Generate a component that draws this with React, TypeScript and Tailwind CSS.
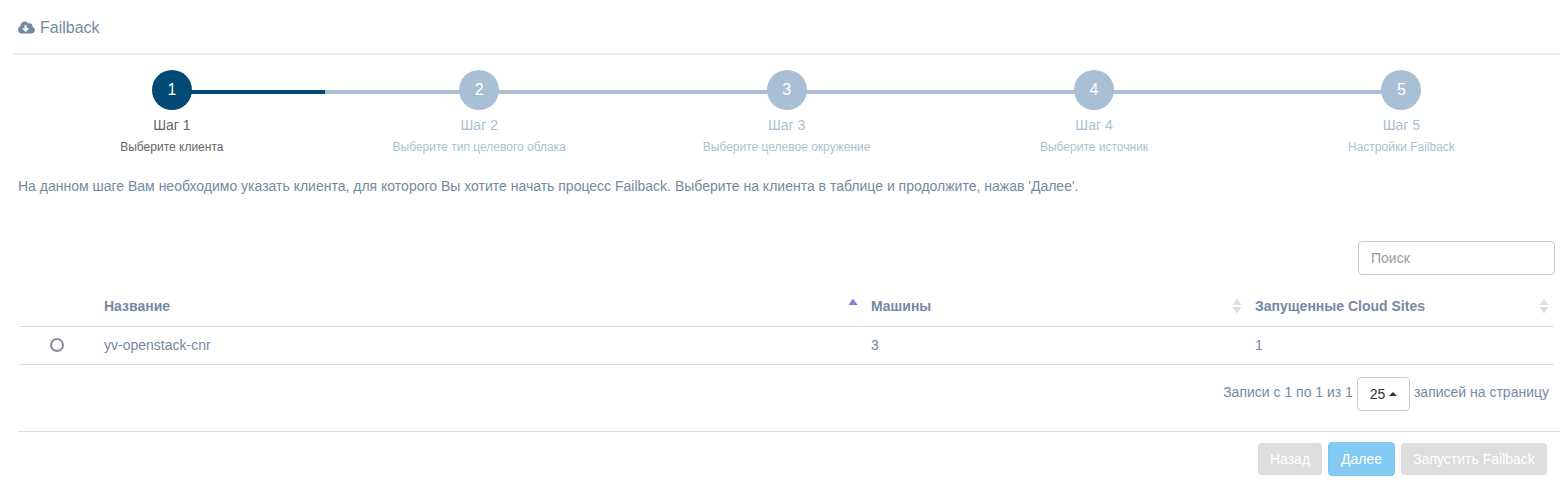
import { FaCloudDownloadAlt } from 'react-icons/fa';

const steps = [
  { title: 'Шаг 1', text: 'Выберите клиента' },
  { title: 'Шаг 2', text: 'Выберите тип целевого облака' },
  { title: 'Шаг 3', text: 'Выберите целевое окружение' },
  { title: 'Шаг 4', text: 'Выберите источник' },
  { title: 'Шаг 5', text: 'Настройки Failback' },
];

function SortIcon() {
  return (
    <svg width="10" height="16" viewBox="0 0 10 16" className="shrink-0">
      <path d="M5 0.5 L9.5 7 L0.5 7 Z" fill="#dcdfe3" />
      <path d="M5 15.5 L9.5 9 L0.5 9 Z" fill="#dcdfe3" />
    </svg>
  );
}

function Step({ index, title, text }: { index: number; title: string; text: string }) {
  const active = index === 0;
  const last = index === steps.length - 1;
  return (
    <div className="relative flex flex-col items-center">
      {!last && (
        <div className="absolute left-1/2 top-[20px] flex h-[4px] w-full bg-[#a9bfd3]">
          {active && <div className="h-full w-[153px] bg-[#004a75]" />}
        </div>
      )}
      <div
        className={`relative flex h-10 w-10 items-center justify-center rounded-full text-base text-white ${
          active ? 'bg-[#004a75]' : 'bg-[#a9bfd3]'
        }`}
      >
        {index + 1}
      </div>
      <div className={`mt-[7px] text-sm leading-[16px] ${active ? 'text-[#666666]' : 'text-[#a9bfd3]'}`}>{title}</div>
      <div className={`mt-[6px] text-xs leading-[16px] ${active ? 'text-[#666666]' : 'text-[#a9bfd3]'}`}>{text}</div>
    </div>
  );
}

export default function App() {
  return (
    <main className="h-[492px] overflow-hidden bg-white px-2 font-['Liberation_Sans',sans-serif] text-sm text-[#748aa1]">
      <div className="ml-[5px] w-[1547px]">
        <header className="flex h-[55px] items-center gap-[5px] border-b-2 border-[#e7ecf1] px-[5px] pt-[2px] text-base">
          <FaCloudDownloadAlt className="text-[17px]" />
          <span>Failback</span>
        </header>

        <div className="px-[5px]">
          <div className="ml-[0.15px] mt-[15px] grid w-[1537px] grid-cols-5">
            {steps.map((s, i) => (
              <Step key={s.title} index={i} title={s.title} text={s.text} />
            ))}
          </div>

          <p className="mt-[21px] leading-[20px]">
            На данном шаге Вам необходимо указать клиента, для которого Вы хотите начать процесс Failback. Выберите на
            клиента в таблице и продолжите, нажав 'Далее'.
          </p>

          <div className="mt-[45px] flex justify-end">
            <input
              placeholder="Поиск"
              className="h-[34px] w-[197px] rounded border border-[#c8c8c8] px-3 text-sm placeholder:text-[#999999]"
            />
          </div>

          <div className="mt-[11px] px-[1px]">
            <div className="grid h-[41px] grid-cols-[73px_767px_384px_311px] items-center border-b border-[#dddddd] font-bold">
              <div />
              <div className="flex items-center justify-between pl-3 pr-[1px]">
                <span>Название</span>
                <svg width="10" height="8" viewBox="0 0 10 8" className="mb-2 shrink-0">
                  <path d="M5 0.5 L9.5 7 L0.5 7 Z" fill="#7e84d6" />
                </svg>
              </div>
              <div className="flex items-center justify-between pl-3 pr-[1px]">
                <span>Машины</span>
                <SortIcon />
              </div>
              <div className="flex items-center justify-between pl-3 pr-[5px]">
                <span>Запущенные Cloud Sites</span>
                <SortIcon />
              </div>
            </div>
            <div className="grid h-[38px] grid-cols-[73px_767px_384px_311px] items-center border-b border-[#dddddd] pb-[2px]">
              <div className="flex justify-center pl-[2px]">
                <span className="h-[14px] w-[14px] rounded-full border-2 border-[#8d8d9b]" />
              </div>
              <div className="pl-3">yv-openstack-cnr</div>
              <div className="pl-3">3</div>
              <div className="pl-3">1</div>
            </div>
          </div>

          <div className="mt-[12px] flex items-center justify-end pr-[6px]">
            <span className="mb-[5px]">Записи с 1 по 1 из 1</span>
            <button className="ml-1 flex h-[34px] w-[53px] items-center justify-center gap-1 rounded border border-[#cccccc] text-[#333333]">
              25
              <span className="h-0 w-0 border-x-4 border-b-4 border-x-transparent border-b-[#333333]" />
            </button>
            <span className="mb-[5px] ml-1">записей на страницу</span>
          </div>
        </div>

        <div className="ml-[5px] mt-[20px] flex justify-end gap-[6px] border-t border-[#dddddd] pr-[13px] pt-[10px]">
          <button className="mt-[1px] h-[32px] w-[64px] rounded bg-[#dddddd] text-white">Назад</button>
          <button className="h-[34px] w-[67px] rounded border border-[#7cc6f0] bg-[#83cbf3] text-white">Далее</button>
          <button className="mt-[1px] h-[32px] w-[146px] rounded bg-[#dddddd] text-white">Запустить Failback</button>
        </div>
      </div>
    </main>
  );
}
